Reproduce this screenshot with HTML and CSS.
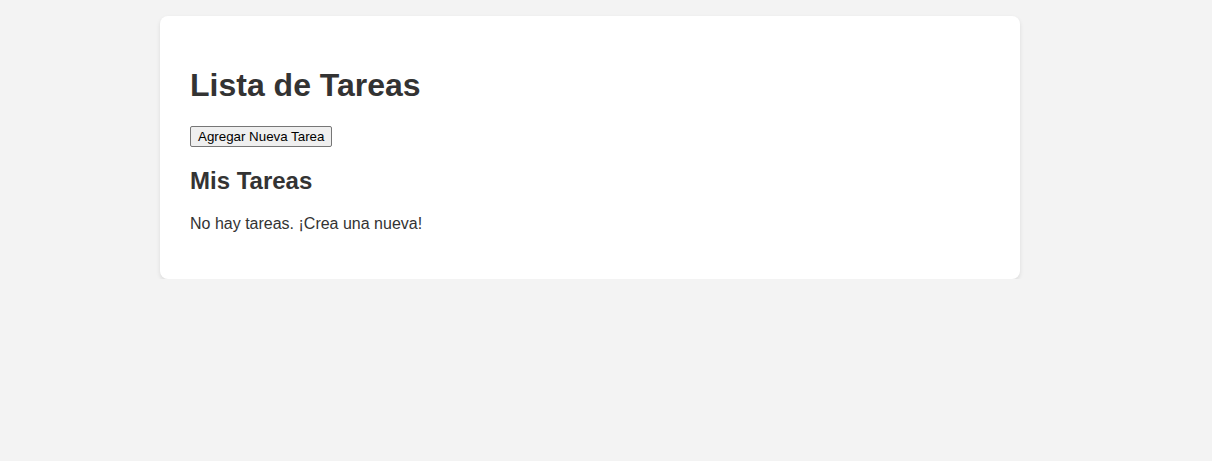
FILE: index.html
```html
<!DOCTYPE html>
<html lang="es">
<head>
<meta charset="utf-8">
<title>Lista de Tareas</title>
<link rel="stylesheet" href="styles.css">
</head>
<body>
<div class="container">
  <h1 class="title">Lista de Tareas</h1>
  <button class="add-btn" type="button">Agregar Nueva Tarea</button>
  <h2 class="subtitle">Mis Tareas</h2>
  <p class="empty">No hay tareas. ¡Crea una nueva!</p>
</div>
</body>
</html>
```
FILE: styles.css
```css
html, body {
  margin: 0;
  padding: 0;
}
body {
  background: #f3f3f3;
  font-family: "Liberation Sans", Arial, sans-serif;
  color: #333;
  padding: 16px 0 0 160px;
}
.container {
  box-sizing: border-box;
  width: 860px;
  background: #fff;
  border-radius: 8px;
  padding: 30px;
  box-shadow: 0 2px 4px rgba(0, 0, 0, 0.1);
}
.title {
  font-size: 32px;
  margin: 21px 0 22px;
}
.add-btn {
  font-family: "Liberation Sans", Arial, sans-serif;
  font-size: 13.33px;
  color: #000;
  background: #efefef;
  border: 1px solid #767676;
  border-radius: 2px;
  padding: 2px 7px;
  margin: 0;
}
.subtitle {
  font-size: 24px;
  margin: 20px 0;
}
.empty {
  font-size: 16px;
  margin: 16px 0;
}
```
